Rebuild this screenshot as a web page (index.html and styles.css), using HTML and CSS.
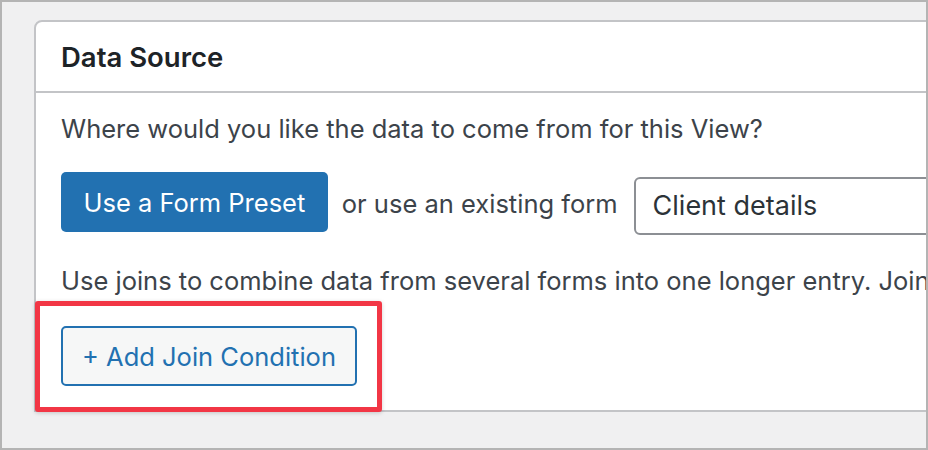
FILE: index.html
```html
<!DOCTYPE html>
<html lang="en">
<head>
  <meta charset="UTF-8" />
  <meta name="viewport" content="width=device-width, initial-scale=1.0"/>
  <title>Data Source</title>
  <link rel="stylesheet" href="styles.css">
</head>
<body>
  <div class="frame">
    <div class="card">
      <div class="card-header">
        <h2>Data Source</h2>
      </div>
      <div class="card-body">
        <p class="intro">Where would you like the data to come from for this View?</p>

        <div class="source-row">
          <button class="btn-primary">Use a Form Preset</button>
          <span class="or-text">or use an existing form</span>
          <div class="form-select">Client details</div>
        </div>

        <p class="joins-text">Use joins to combine data from several forms into one longer entry. Join conditions are optional.</p>

        <div class="join-wrap">
          <!-- red annotation around the join button -->
          <div class="highlight"></div>
          <button class="btn-secondary">+ Add Join Condition</button>
        </div>
      </div>
    </div>
  </div>
</body>
</html>
```

FILE: styles.css
```css
body {
  margin: 0;
  font-family: Inter, "Liberation Sans", Arial, sans-serif;
  background: #f0f0f1;
}

.frame {
  width: 928px;
  height: 450px;
  box-sizing: border-box;
  border: 2px solid #b4b4b4;
  background: #f0f0f1;
  overflow: hidden;
  padding: 18px 0 0 32px;
}

.card {
  width: 1100px;
  background: #fff;
  border: 2px solid #c3c4c7;
  border-radius: 8px 0 0 0;
}

.card-header {
  height: 69px;
  display: flex;
  align-items: center;
  padding: 0 25px;
  border-bottom: 2px solid #c3c4c7;
}

.card-header h2 {
  margin: 0;
  font-size: 27.5px;
  font-weight: 600;
  color: #1d2327;
}

.card-body {
  padding: 20px 25px 24px;
  color: #3c434a;
  font-size: 25.5px;
  line-height: 32px;
}

.card-body p {
  margin: 0;
  white-space: nowrap;
}

.source-row {
  display: flex;
  align-items: flex-start;
  margin-top: 27px;
}

.btn-primary {
  height: 60px;
  padding: 0 22.5px;
  border: none;
  border-radius: 5px;
  background: #2271b1;
  color: #fff;
  font-family: inherit;
  font-size: 25.5px;
}

.or-text {
  align-self: center;
  margin: 0 16px 0 14px;
  white-space: nowrap;
}

.form-select {
  margin-top: 5px;
  width: 400px;
  height: 58px;
  box-sizing: border-box;
  flex-shrink: 0;
  display: flex;
  align-items: center;
  padding-left: 17px;
  border: 2px solid #8c8f94;
  border-radius: 6px;
  color: #2c3338;
  font-size: 27px;
}

.joins-text {
  margin-top: 30px !important;
}

.join-wrap {
  position: relative;
  display: inline-block;
  margin-top: 29px;
}

.btn-secondary {
  position: relative;
  height: 60px;
  padding: 0 19px;
  border: 2px solid #2271b1;
  border-radius: 5px;
  background: #f6f7f7;
  color: #2271b1;
  font-family: inherit;
  font-size: 25.5px;
}

.highlight {
  position: absolute;
  top: -25px;
  left: -26px;
  right: -25px;
  bottom: -26px;
  border: 5px solid #f23645;
  border-radius: 3px;
  background: #fff;
  box-shadow: 0 1px 4px rgba(0, 0, 0, 0.18);
}
```
